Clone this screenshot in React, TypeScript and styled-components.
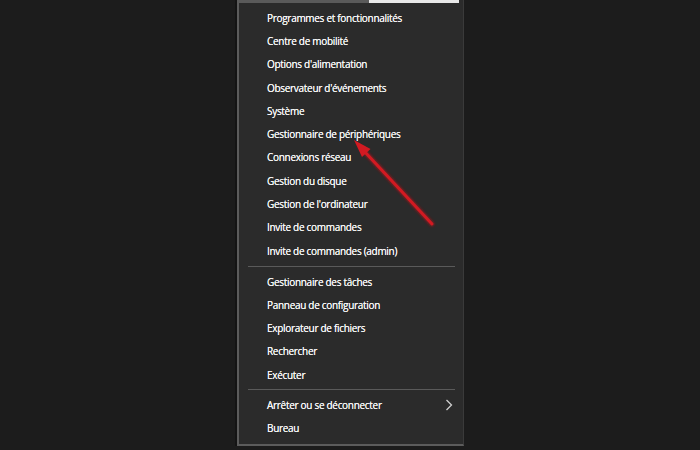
import styled, { createGlobalStyle } from "styled-components";

const GlobalStyle = createGlobalStyle`
  html, body {
    margin: 0;
    padding: 0;
    background: #1c1c1c;
  }
  body {
    width: 700px;
    height: 450px;
    overflow: hidden;
    font-family: "Open Sans", "Noto Sans", sans-serif;
  }
`;

const Screen = styled.div`
  position: relative;
  width: 700px;
  height: 450px;
  background: #1c1c1c;
`;

const Menu = styled.div`
  margin-left: 237px;
  width: 227px;
  height: 446px;
  box-sizing: border-box;
  background: #2b2b2b;
  border-left: 2px solid #5c5c5c;
  border-right: 1px solid #3a3a3a;
  border-bottom: 2px solid #5c5c5c;
  box-shadow: -2px 0 0 #141414;
  display: flex;
  flex-direction: column;
`;

const TopEdge = styled.div`
  display: flex;
  height: 3px;

  .dark {
    width: 130px;
    background: #5a5a5a;
  }
  .light {
    flex: 1;
    background: #e8e8e8;
    margin-right: 4px;
  }
`;

const Group = styled.div<{ $top?: number }>`
  display: flex;
  flex-direction: column;
  padding-top: ${(p) => p.$top ?? 0}px;
`;

const Item = styled.div`
  height: 23.3px;
  display: flex;
  align-items: center;
  justify-content: space-between;
  padding: 0 10px 0 28px;
  color: #f4f4f4;
  font-size: 10px;
  letter-spacing: -0.3px;
  text-shadow: 0 0 0.4px #ffffff;
  white-space: nowrap;
`;

const Separator = styled.div<{ $h: number }>`
  height: ${(p) => p.$h}px;
  display: flex;
  align-items: center;
  padding: 0 8px 0 9px;

  &::after {
    content: "";
    flex: 1;
    height: 1px;
    background: #5a5a5a;
  }
`;

const Arrow = styled.svg`
  position: absolute;
  left: 0;
  top: 0;
  pointer-events: none;
`;

const Chevron = () => (
  <svg width="8" height="12" viewBox="0 0 8 12">
    <polyline points="1.5,1 6.5,6 1.5,11" fill="none" stroke="#cfcfcf" strokeWidth="1.3" />
  </svg>
);

const groupA = [
  "Programmes et fonctionnalités",
  "Centre de mobilité",
  "Options d'alimentation",
  "Observateur d'événements",
  "Système",
  "Gestionnaire de périphériques",
  "Connexions réseau",
  "Gestion du disque",
  "Gestion de l'ordinateur",
  "Invite de commandes",
  "Invite de commandes (admin)",
];

const groupB = [
  "Gestionnaire des tâches",
  "Panneau de configuration",
  "Explorateur de fichiers",
  "Rechercher",
  "Exécuter",
];

export default function App() {
  return (
    <Screen>
      <GlobalStyle />
      <Menu>
        <TopEdge>
          <span className="dark" />
          <span className="light" />
        </TopEdge>
        <Group $top={3}>
          {groupA.map((t) => (
            <Item key={t}>{t}</Item>
          ))}
        </Group>
        <Separator $h={7.7} />
        <Group>
          {groupB.map((t) => (
            <Item key={t}>{t}</Item>
          ))}
        </Group>
        <Separator $h={6.7} />
        <Group>
          <Item>
            Arrêter ou se déconnecter
            <Chevron />
          </Item>
          <Item>Bureau</Item>
        </Group>
      </Menu>
      <Arrow width="700" height="450" viewBox="0 0 700 450">
        <defs>
          <filter id="glow" x="-20%" y="-20%" width="140%" height="140%">
            <feGaussianBlur stdDeviation="1" />
          </filter>
        </defs>
        <g filter="url(#glow)" opacity="0.6">
          <line x1="432" y1="224" x2="364" y2="151" stroke="#b0141a" strokeWidth="5" strokeLinecap="round" />
        </g>
        <line x1="432" y1="224" x2="364" y2="151" stroke="#d21a22" strokeWidth="3" strokeLinecap="round" />
        <polygon points="354,140 370.5,149 362,157" fill="#d21a22" />
      </Arrow>
    </Screen>
  );
}
